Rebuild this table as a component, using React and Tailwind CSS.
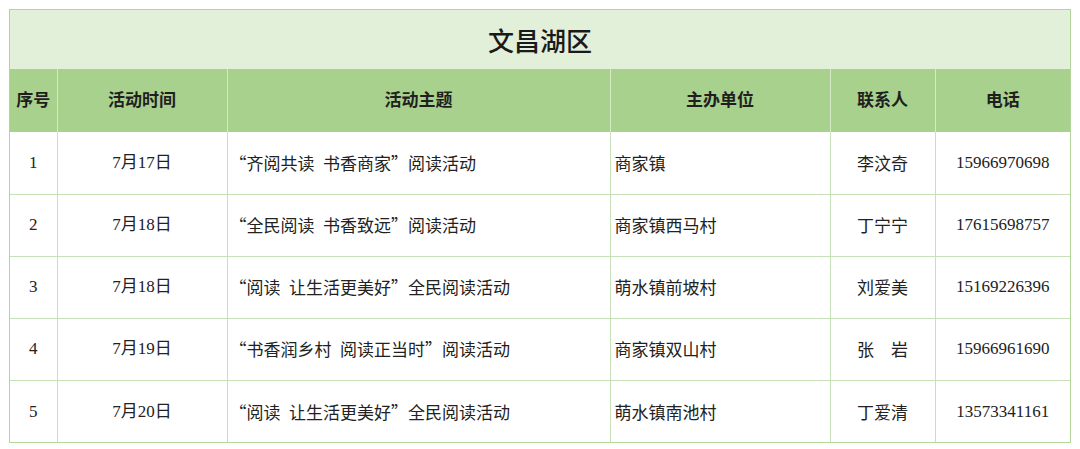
import React from "react";

const rows = [
  { no: "1", date: "7月17日", topic: "“齐阅共读\u2002书香商家”阅读活动", unit: "商家镇", contact: "李汶奇", phone: "15966970698" },
  { no: "2", date: "7月18日", topic: "“全民阅读\u2002书香致远”阅读活动", unit: "商家镇西马村", contact: "丁宁宁", phone: "17615698757" },
  { no: "3", date: "7月18日", topic: "“阅读\u2002让生活更美好”全民阅读活动", unit: "萌水镇前坡村", contact: "刘爱美", phone: "15169226396" },
  { no: "4", date: "7月19日", topic: "“书香润乡村\u2002阅读正当时”阅读活动", unit: "商家镇双山村", contact: "张　岩", phone: "15966961690" },
  { no: "5", date: "7月20日", topic: "“阅读\u2002让生活更美好”全民阅读活动", unit: "萌水镇南池村", contact: "丁爱清", phone: "13573341161" },
];

const serif = { fontFamily: '"Liberation Serif", "Noto Sans CJK SC", serif' };
const cjk = { fontFamily: '"Noto Sans CJK SC", sans-serif' };

export default function App() {
  return (
    <div className="w-[1080px] h-[449px] bg-white pt-[9px] pl-[9px]">
      <div className="w-[1062px] border border-[#b3d49a]">
        {/* 标题 */}
        <div
          className="h-[59px] bg-[#e2efd9] flex items-center justify-center text-[26px] font-medium text-[#1a1a1a]"
          style={cjk}
        >
          文昌湖区
        </div>
        <table className="w-full table-fixed border-collapse text-[17px] text-[#222]" style={serif}>
          <colgroup>
            <col className="w-[47px]" />
            <col className="w-[170px]" />
            <col className="w-[383px]" />
            <col className="w-[220px]" />
            <col className="w-[105px]" />
            <col />
          </colgroup>
          <thead>
            <tr className="h-[63px] bg-[#a9d18e] text-[#1f1f1f]">
              <th className="border-r border-[#d5e9c6] font-bold text-center">序号</th>
              <th className="border-r border-[#d5e9c6] font-bold text-center">活动时间</th>
              <th className="border-r border-[#d5e9c6] font-bold text-center">活动主题</th>
              <th className="border-r border-[#d5e9c6] font-bold text-center">主办单位</th>
              <th className="border-r border-[#d5e9c6] font-bold text-center">联系人</th>
              <th className="font-bold text-center">电话</th>
            </tr>
          </thead>
          <tbody>
            {rows.map((r, i) => (
              <tr key={r.no} className={`h-[62px] ${i > 0 ? "border-t border-[#c9e1b8]" : ""}`}>
                <td className="border-r border-[#c9e1b8] text-center">{r.no}</td>
                <td className="border-r border-[#c9e1b8] text-center">{r.date}</td>
                <td className="border-r border-[#c9e1b8] pl-[2px] whitespace-pre" style={cjk}>{r.topic}</td>
                <td className="border-r border-[#c9e1b8] pl-[4px]" style={cjk}>{r.unit}</td>
                <td className="border-r border-[#c9e1b8] text-center whitespace-pre" style={cjk}>{r.contact}</td>
                <td className="text-center">{r.phone}</td>
              </tr>
            ))}
          </tbody>
        </table>
      </div>
    </div>
  );
}
